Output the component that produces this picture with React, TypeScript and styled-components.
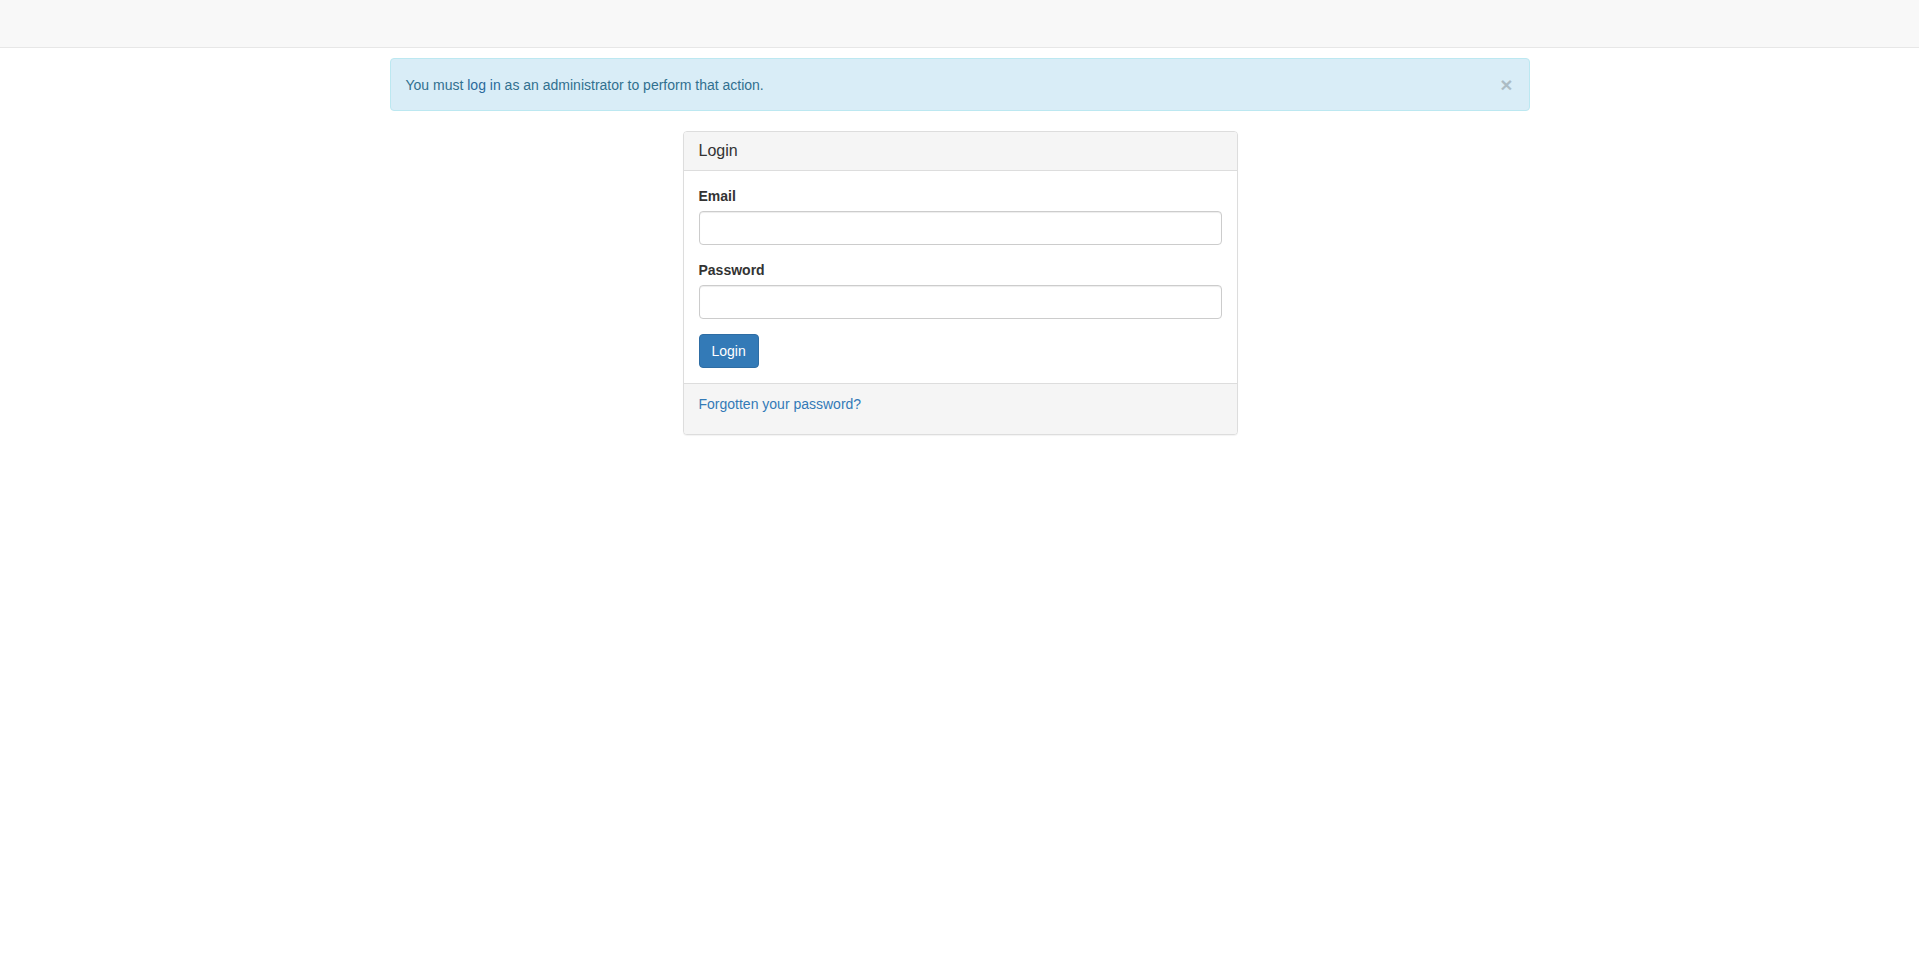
import React from "react";
import styled, { createGlobalStyle } from "styled-components";

const Global = createGlobalStyle`
  * { box-sizing: border-box; }
  html, body { margin: 0; padding: 0; background: #fff; }
  body {
    font-family: "Liberation Sans", Arial, Helvetica, sans-serif;
    font-size: 14px;
    line-height: 1.42857143;
    color: #333;
  }
`;

const Navbar = styled.nav`
  height: 48px;
  background: #f8f8f8;
  border-bottom: 1px solid #e7e7e7;
  margin-bottom: 10px;
`;

const Container = styled.div`
  width: 1170px;
  margin: 0 auto;
  padding: 0 15px;
`;

const Alert = styled.div`
  display: flex;
  align-items: center;
  justify-content: space-between;
  padding: 15px;
  margin-bottom: 20px;
  background: #d9edf7;
  border: 1px solid #bce8f1;
  border-radius: 4px;
  color: #31708f;
  line-height: 20px;
`;

const AlertLink = styled.a`
  color: #2a6a9c;
  text-decoration: none;
`;

const Close = styled.button`
  background: none;
  border: 0;
  padding: 0;
  margin-right: 1px;
  font-family: "Liberation Sans", Arial, sans-serif;
  font-size: 21px;
  font-weight: bold;
  line-height: 1;
  color: #000;
  opacity: 0.2;
  cursor: pointer;
`;

const Column = styled.div`
  width: 555px;
  margin-left: 293px;
`;

const Panel = styled.div`
  border: 1px solid #ddd;
  border-radius: 4px;
  background: #fff;
  margin-bottom: 20px;
  box-shadow: 0 1px 1px rgba(0, 0, 0, 0.05);
`;

const PanelHeading = styled.div`
  padding: 10px 15px;
  background: #f5f5f5;
  border-bottom: 1px solid #ddd;
  border-radius: 3px 3px 0 0;
`;

const PanelTitle = styled.h3`
  margin: 0;
  font-size: 16px;
  font-weight: normal;
  line-height: 1.1;
  color: #333;
`;

const PanelBody = styled.div`
  padding: 15px;
`;

const FormGroup = styled.div`
  margin-bottom: 15px;
`;

const Label = styled.label`
  display: inline-block;
  margin-bottom: 5px;
  font-weight: bold;
  line-height: 20px;
`;

const Input = styled.input`
  display: block;
  width: 100%;
  height: 34px;
  padding: 6px 12px;
  font-size: 14px;
  font-family: inherit;
  color: #555;
  background: #fff;
  border: 1px solid #ccc;
  border-radius: 4px;
  box-shadow: inset 0 1px 1px rgba(0, 0, 0, 0.075);
  outline: none;
`;

const Button = styled.button`
  display: inline-block;
  padding: 6px 12px;
  font-family: inherit;
  font-size: 14px;
  line-height: 20px;
  color: #fff;
  background: #337ab7;
  border: 1px solid #2e6da4;
  border-radius: 4px;
  cursor: pointer;
`;

const PanelFooter = styled.div`
  padding: 10px 15px;
  background: #f5f5f5;
  border-top: 1px solid #ddd;
  border-radius: 0 0 3px 3px;
`;

const FooterText = styled.p`
  margin: 0 0 10px;
`;

const Link = styled.a`
  color: #337ab7;
  text-decoration: none;
`;

export default function App() {
  return (
    <>
      <Global />
      <Navbar />
      <Container>
        <Alert>
          <span>
            You must <AlertLink href="#">log in</AlertLink> as an administrator to perform that action.
          </span>
          <Close aria-label="Close">×</Close>
        </Alert>
        <Column>
          <Panel>
            <PanelHeading>
              <PanelTitle>Login</PanelTitle>
            </PanelHeading>
            <PanelBody>
              <FormGroup>
                <Label htmlFor="email">Email</Label>
                <Input id="email" type="email" />
              </FormGroup>
              <FormGroup>
                <Label htmlFor="password">Password</Label>
                <Input id="password" type="password" />
              </FormGroup>
              <Button type="submit">Login</Button>
            </PanelBody>
            <PanelFooter>
              <FooterText>
                <Link href="#">Forgotten your password?</Link>
              </FooterText>
            </PanelFooter>
          </Panel>
        </Column>
      </Container>
    </>
  );
}
